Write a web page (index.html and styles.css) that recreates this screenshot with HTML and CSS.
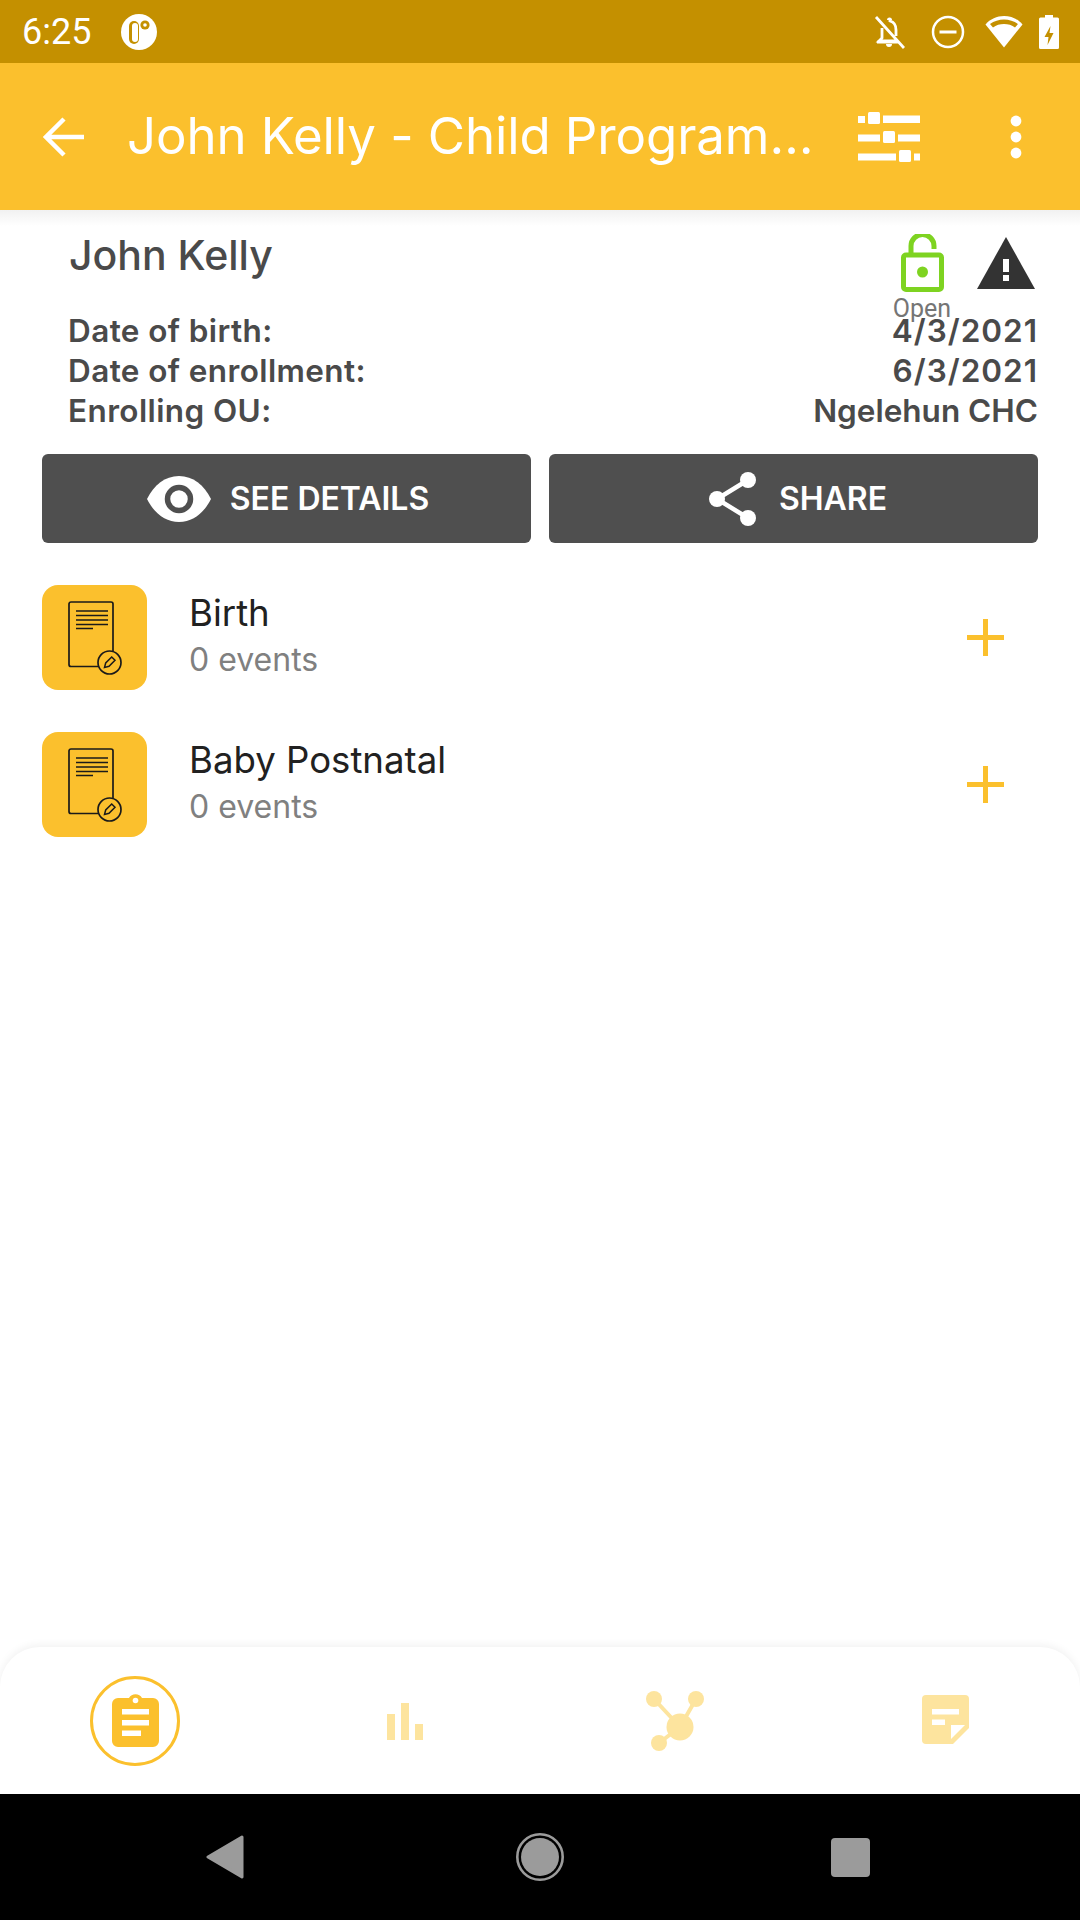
FILE: index.html
```html
<!DOCTYPE html>
<html lang="en">
<head>
<meta charset="utf-8">
<title>John Kelly - Child Programme</title>
<link rel="stylesheet" href="styles.css">
</head>
<body>
<div class="app">
  <header class="statusbar">
    <div class="status-left">
      <span class="clock">6:25</span>
      <svg class="status-app" viewBox="0 0 36 36"><circle cx="18" cy="18" r="18" fill="#fff"/><path d="M8 12a5 5 0 0 1 10 0v13a5 5 0 0 1-10 0z" fill="#c49000"/><path d="M11 12a3 3 0 0 1 6 0v13a3 3 0 0 1-6 0z" fill="#fff"/><circle cx="24" cy="11" r="4.600" fill="#c49000"/><circle cx="24" cy="11" r="1.800" fill="#fff"/></svg>
    </div>
    <div class="status-right">
      <svg class="st-bell" viewBox="0 0 32 34"><path d="M17 4v2c4 1 6 4 6 9v6M9 13v10l-3 3h18M4 27h22M3 2l28 31" fill="none" stroke="#fff" stroke-width="2.800"/><path d="M13 29h6a3 3 0 0 1-6 0zM14 5a2.500 2.500 0 0 1 5 0z" fill="#fff"/></svg>
      <svg class="st-dnd" viewBox="0 0 34 34"><circle cx="17" cy="17" r="15" fill="none" stroke="#fff" stroke-width="2.500"/><rect x="8.500" y="15.500" width="17" height="3" fill="#fff"/></svg>
      <svg class="st-wifi" viewBox="0 0 38 33"><path d="M0.500 9.500C5 4 12 1 19 1s14 3 18.500 8.500L19 32.500z" fill="#fff"/><path d="M5 9C9 6 14 4.500 19 4.500S29 6 33 9l-3 3.500C27 10 23 9 19 9s-8 1-11 3.500z" fill="#c49000"/></svg>
      <svg class="st-batt" viewBox="0 0 20 34"><path d="M6 0h8v2.500h4.500a1.500 1.500 0 0 1 1.500 1.500v28.500a1.500 1.500 0 0 1-1.500 1.500H1.500A1.500 1.500 0 0 1 0 32.500V4a1.500 1.500 0 0 1 1.500-1.500H6z" fill="#fff"/><path d="M11.500 11l-6 11h4l-1 8 6-12h-4z" fill="#c49000"/></svg>
    </div>
  </header>

  <div class="toolbar">
    <svg class="tb-back" viewBox="0 0 42 42"><path d="M41 21H5M21 3L3 21l18 18" fill="none" stroke="#fff" stroke-width="4.500"/></svg>
    <h1 class="tb-title">John Kelly - Child Program…</h1>
    <svg class="tb-filter" viewBox="0 0 62 50"><g fill="#fff"><rect y="4" width="7" height="7"/><rect x="10" y="0" width="12" height="12" rx="1.500"/><rect x="25" y="3.500" width="37" height="7.500"/><rect y="22.500" width="22" height="7"/><rect x="25" y="19" width="12" height="12" rx="1.500"/><rect x="40" y="22.500" width="22" height="7"/><rect y="41.500" width="38" height="7"/><rect x="41" y="38" width="12" height="12" rx="1.500"/><rect x="56" y="41.500" width="6" height="7"/></g></svg>
    <svg class="tb-more" viewBox="0 0 12 44"><g fill="#fff"><circle cx="6" cy="6" r="5.400"/><circle cx="6" cy="22" r="5.400"/><circle cx="6" cy="38" r="5.400"/></g></svg>
  </div>

  <section class="card">
    <div class="card-top">
      <div class="name">John Kelly</div>
      <div class="badges">
        <div class="badge-open">
          <svg class="ic-lock" viewBox="0 0 43 58"><path d="M10 21v-9a11.500 11.500 0 0 1 23 0v3" fill="none" stroke="#7ed321" stroke-width="5"/><rect x="2.500" y="21" width="38" height="34.500" rx="2.500" fill="none" stroke="#7ed321" stroke-width="5"/><circle cx="21.500" cy="38" r="5.500" fill="#7ed321"/></svg>
          <span class="open-label">Open</span>
        </div>
        <svg class="ic-warn" viewBox="0 0 58 52"><path d="M29 0l29 52H0z" fill="#333"/><rect x="26" y="22" width="6" height="13" fill="#fff"/><rect x="26" y="38" width="6" height="6" fill="#fff"/></svg>
      </div>
    </div>
    <dl class="facts">
      <div class="fact"><dt>Date of birth:</dt><dd class="date">4/3/2021</dd></div>
      <div class="fact"><dt>Date of enrollment:</dt><dd class="date">6/3/2021</dd></div>
      <div class="fact"><dt>Enrolling OU:</dt><dd>Ngelehun CHC</dd></div>
    </dl>
    <div class="actions">
      <button class="btn btn-details">
        <svg class="ic-eye" viewBox="0 0 64 46"><path d="M0 23C7 9 18 0 32 0s25 9 32 23c-7 14-18 23-32 23S7 37 0 23z" fill="#fff"/><circle cx="32" cy="23" r="11.500" fill="none" stroke="#4f4f4f" stroke-width="5.500"/></svg>
        <span>SEE DETAILS</span>
      </button>
      <button class="btn btn-share">
        <svg class="ic-share" viewBox="0 0 47 54"><path d="M39 8L8 27l31 19" fill="none" stroke="#fff" stroke-width="4.500"/><g fill="#fff"><circle cx="39" cy="8" r="8"/><circle cx="8" cy="27" r="8"/><circle cx="39" cy="46" r="8"/></g></svg>
        <span>SHARE</span>
      </button>
    </div>
  </section>

  <main class="list">
    <article class="stage">
      <div class="stage-icon">
        <svg class="ic-doc" viewBox="0 0 54 74"><path d="M30 65.500H3a2 2 0 0 1-2-2V3a2 2 0 0 1 2-2h40a2 2 0 0 1 2 2v47" fill="none" stroke="#1a1a1a" stroke-width="1.700"/><path d="M8 10h32M8 14.500h32M8 19h32M8 23.500h32M8 27.500h17" stroke="#1a1a1a" stroke-width="1.500"/><circle cx="41.500" cy="61.500" r="11.500" fill="none" stroke="#1a1a1a" stroke-width="1.700"/><path d="M36.500 66.500l1.200-4.500 6-6 3.300 3.300-6 6z" fill="none" stroke="#1a1a1a" stroke-width="1.500"/></svg>
      </div>
      <div class="stage-text">
        <div class="stage-name">Birth</div>
        <div class="stage-count">0 events</div>
      </div>
      <svg class="ic-plus" viewBox="0 0 37 37"><path d="M18.500 0v37M0 18.500h37" stroke="#fbc02d" stroke-width="5"/></svg>
    </article>
    <article class="stage">
      <div class="stage-icon">
        <svg class="ic-doc" viewBox="0 0 54 74"><path d="M30 65.500H3a2 2 0 0 1-2-2V3a2 2 0 0 1 2-2h40a2 2 0 0 1 2 2v47" fill="none" stroke="#1a1a1a" stroke-width="1.700"/><path d="M8 10h32M8 14.500h32M8 19h32M8 23.500h32M8 27.500h17" stroke="#1a1a1a" stroke-width="1.500"/><circle cx="41.500" cy="61.500" r="11.500" fill="none" stroke="#1a1a1a" stroke-width="1.700"/><path d="M36.500 66.500l1.200-4.500 6-6 3.300 3.300-6 6z" fill="none" stroke="#1a1a1a" stroke-width="1.500"/></svg>
      </div>
      <div class="stage-text">
        <div class="stage-name">Baby Postnatal</div>
        <div class="stage-count">0 events</div>
      </div>
      <svg class="ic-plus" viewBox="0 0 37 37"><path d="M18.500 0v37M0 18.500h37" stroke="#fbc02d" stroke-width="5"/></svg>
    </article>
  </main>

  <nav class="tabs">
    <div class="tab tab-active">
      <svg class="ic-clip" viewBox="0 0 47 55"><path d="M6 6h11a7.500 7.500 0 0 1 13 0h11a6 6 0 0 1 6 6v37a6 6 0 0 1-6 6H6a6 6 0 0 1-6-6V12a6 6 0 0 1 6-6z" fill="#fbc02d"/><circle cx="23.500" cy="8.500" r="2.800" fill="#fff"/><g fill="#fff"><rect x="10" y="17" width="27" height="5.500"/><rect x="10" y="28" width="27" height="5.500"/><rect x="10" y="38.500" width="19" height="5.500"/></g></svg>
    </div>
    <div class="tab">
      <svg class="ic-bars" viewBox="0 0 36 37"><g fill="#fde49e"><rect y="11" width="8" height="26"/><rect x="14" width="8" height="37"/><rect x="28" y="21" width="8" height="16"/></g></svg>
    </div>
    <div class="tab">
      <svg class="ic-net" viewBox="0 0 58 60"><path d="M8 8l26 28M50 8L34 36M13 52l21-16" stroke="#fde49e" stroke-width="4" fill="none"/><g fill="#fde49e"><circle cx="8" cy="8" r="8"/><circle cx="50" cy="8" r="8"/><circle cx="13" cy="52" r="8"/><circle cx="34" cy="36" r="13.500"/></g></svg>
    </div>
    <div class="tab">
      <svg class="ic-note" viewBox="0 0 47 49"><path d="M4 0h39a4 4 0 0 1 4 4v29L31 49H4a4 4 0 0 1-4-4V4a4 4 0 0 1 4-4z" fill="#fde49e"/><g fill="#fff"><rect x="10" y="14" width="27" height="5.500"/><rect x="10" y="24.500" width="13" height="5.500"/><path d="M29 30h14L29 44z"/></g></svg>
    </div>
  </nav>

  <footer class="navbar">
    <svg class="nb-back" viewBox="0 0 38 44"><path d="M36 2L2 22l34 20z" fill="#9b9b9b" stroke="#9b9b9b" stroke-width="3" stroke-linejoin="round"/></svg>
    <svg class="nb-home" viewBox="0 0 48 48"><circle cx="24" cy="24" r="22.700" fill="none" stroke="#9b9b9b" stroke-width="2.600"/><circle cx="24" cy="24" r="19" fill="#9b9b9b"/></svg>
    <div class="nb-recent"></div>
  </footer>
</div>
</body>
</html>
```

FILE: styles.css
```css
* { box-sizing: border-box; }
html, body { margin: 0; padding: 0; background: #fff; }
svg { display: block; flex: none; }
.app {
  width: 1080px; height: 1920px; display: flex; flex-direction: column;
  font-family: Inter, "Liberation Sans", sans-serif; overflow: hidden; background: #fff;
}

.statusbar {
  height: 63px; flex: none; background: #c49000; display: flex;
  align-items: center; justify-content: space-between; padding: 0 21px 0 22px;
}
.status-left { display: flex; align-items: center; gap: 30px; }
.clock { font: 400 36px/1 Roboto, sans-serif; color: #fff; }
.status-app { width: 36px; height: 36px; }
.status-right { display: flex; align-items: center; }
.st-bell { width: 32px; height: 34px; margin-right: 26px; }
.st-dnd { width: 34px; height: 34px; margin-right: 20px; }
.st-wifi { width: 38px; height: 33px; margin-right: 16px; }
.st-batt { width: 20px; height: 34px; }

.toolbar {
  height: 147px; flex: none; background: #fbc02d; display: flex; align-items: center;
  padding: 0 0 0 43px; position: relative; z-index: 2;
}
.tb-back { width: 42px; height: 42px; margin-right: 42px; }
.tb-title {
  margin: 0 0 3px; width: 690px; flex: none; font: 400 51px/1 Inter, sans-serif; color: #fff;
  white-space: nowrap; letter-spacing: -0.1px;
}
.tb-filter { width: 62px; height: 50px; margin-left: 41px; }
.tb-more { width: 12px; height: 44px; margin-left: 90px; }

.card {
  flex: none; height: 353px; padding: 0 42px;
  background: linear-gradient(#f1f1f1, #fff 16px);
  border-radius: 0 0 8px 8px; display: flex; flex-direction: column;
}
.card-top { display: flex; justify-content: space-between; height: 100px; padding-left: 27px; }
.name { font: 500 41px/1 Inter, sans-serif; color: #4a4a4a; padding-top: 25px; }
.badges { display: flex; gap: 27px; padding-top: 24px; padding-right: 3px; align-items: flex-start; }
.badge-open { display: flex; flex-direction: column; align-items: center; width: 56px; }
.ic-lock { width: 43px; height: 58px; }
.open-label { font: 400 25px/1 Roboto, sans-serif; color: #757575; margin-top: 4px; }
.ic-warn { width: 58px; height: 52px; margin-top: 3px; }

.facts { margin: 0; padding-left: 26px; padding-top: 1px; color: #4a4a4a; }
.fact { display: flex; justify-content: space-between; height: 40px; align-items: center; }
.fact dt, .fact dd { margin: 0; font: 600 31.500px/40px Inter, sans-serif; }
.fact dt { letter-spacing: 0.4px; }
.fact dd.date { letter-spacing: 1px; }

.actions { display: flex; gap: 18px; margin-top: 23px; }
.btn {
  flex: 0 0 489px; height: 89px; border: 0; border-radius: 6px; background: #4f4f4f; color: #fff;
  font: 600 32px/1 Inter, sans-serif; display: flex; align-items: center; justify-content: center; gap: 19px;
}
.btn-details { padding: 0 0 0 3px; }
.btn-share { padding: 0 0 0 9px; }
.ic-eye { width: 64px; height: 46px; }
.ic-share { width: 47px; height: 54px; margin-right: 4px; }

.list { flex: 1; display: flex; flex-direction: column; gap: 42px; padding: 22px 42px 0; }
.stage { display: flex; align-items: center; height: 105px; }
.stage-icon {
  width: 105px; height: 105px; border-radius: 16px; background: #fbc02d; flex: none;
  display: flex; align-items: center; justify-content: center;
}
.ic-doc { width: 54px; height: 74px; }
.stage-text { flex: 1; padding-left: 42px; margin-top: -3px; }
.stage-name { font: 400 36.600px/46px Inter, sans-serif; color: #212121; }
.stage-count { font: 400 32px/47px Inter, sans-serif; color: #808080; }
.ic-plus { width: 37px; height: 37px; margin-right: 34px; }

.tabs {
  flex: none; height: 147px; background: #fff; border-radius: 40px 40px 0 0;
  box-shadow: 0 -2px 8px rgba(0,0,0,.06); display: grid; grid-template-columns: repeat(4, 270px);
  align-items: center; justify-items: center;
}
.tab { width: 90px; height: 90px; display: flex; align-items: center; justify-content: center; }
.tab-active { border: 3px solid #fbc02d; border-radius: 50%; }
.ic-clip { width: 47px; height: 55px; margin-top: -2px; }
.ic-bars { width: 36px; height: 37px; margin-top: 2px; }
.ic-net { width: 58px; height: 60px; }
.ic-note { width: 47px; height: 49px; margin-top: -2px; }

.navbar {
  flex: none; height: 126px; background: #000; display: flex; align-items: center;
  padding: 0 210px 0 206px; justify-content: space-between;
}
.nb-back { width: 38px; height: 44px; }
.nb-home { width: 48px; height: 48px; margin-left: 5px; }
.nb-recent { width: 39px; height: 39px; border-radius: 4px; background: #9b9b9b; }
```
